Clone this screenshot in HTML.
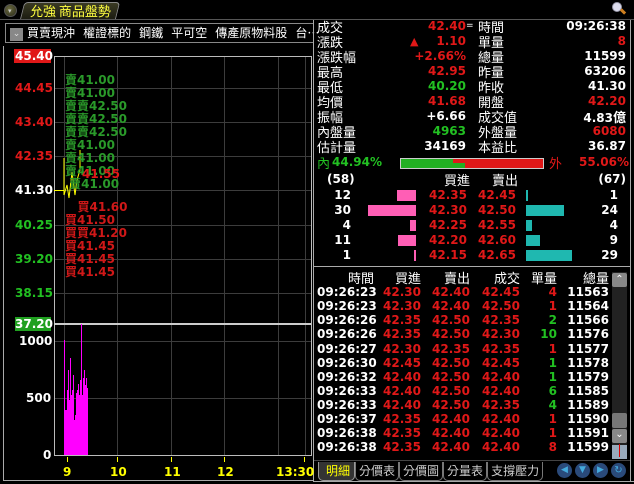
<!DOCTYPE html>
<html><head><meta charset="utf-8">
<style>
*{margin:0;padding:0;box-sizing:border-box}
body{width:634px;height:484px;background:#000;position:relative;overflow:hidden;font-family:"DejaVu Sans","Noto Sans CJK TC",sans-serif;color:#fff}
.a{position:absolute;white-space:nowrap}
.n{font-family:"DejaVu Sans",sans-serif;font-weight:bold;font-size:12px}
.c{font-family:"Noto Sans CJK TC","WenQuanYi Zen Hei",sans-serif;font-size:13px;color:#fff}
.r{color:#e01818}.g{color:#22c022}.w{color:#fff}
.row{position:absolute;left:0;width:634px;height:15px;line-height:15px}
.row span{position:absolute;white-space:nowrap}
</style></head><body>
<div class="a" style="left:0;top:0;width:634px;height:19px;background:#000"></div>
<div class="a" style="left:4px;top:4px;width:13px;height:13px;border-radius:50%;background:radial-gradient(circle at 40% 35%,#6a6a40,#2a2a18);border:1px solid #555"></div>
<div class="a" style="left:8px;top:7px;color:#ccc;font-size:7px">▾</div>
<div class="a" style="left:22px;top:2px;width:96px;height:18px;background:linear-gradient(#3a3a24,#1a1a10);border:1px solid #888;border-bottom:none;transform:skewX(-14deg);border-radius:4px 4px 0 0"></div>
<div class="a c" style="left:30px;top:1px;color:#ffff40;font-size:13px">允強 商品盤勢</div>
<div class="a" style="left:0;top:19px;width:634px;height:1px;background:#555"></div>
<div class="a" style="left:612px;top:2px;width:10px;height:10px;border-radius:50%;background:#dde;border:1px solid #99a"></div>
<div class="a" style="left:620px;top:10px;width:6px;height:3px;background:#d08020;transform:rotate(45deg)"></div>
<div class="a" style="left:5px;top:23px;width:309px;height:20px;border:1px solid #888"></div>
<div class="a" style="left:10px;top:28px;width:13px;height:13px;background:#888;color:#ddd;font-size:9px;text-align:center;line-height:13px">⌄</div>
<div class="a c" style="left:27px;top:24px;font-size:12px;letter-spacing:0">買賣現沖&nbsp;&nbsp;&nbsp;權證標的&nbsp;&nbsp;&nbsp;鋼鐵&nbsp;&nbsp;&nbsp;平可空&nbsp;&nbsp;&nbsp;傳產原物料股&nbsp;&nbsp;&nbsp;台…</div>
<div class="a" style="left:3px;top:46px;width:1px;height:434px;background:#aaa"></div>
<div class="a" style="left:3px;top:480px;width:311px;height:1px;background:#aaa"></div>
<div class="a" style="left:313px;top:20px;width:1px;height:462px;background:#aaa"></div>
<div class="a" style="left:630px;top:20px;width:1px;height:462px;background:#aaa"></div>
<div class="a" style="left:314px;top:481px;width:320px;height:1px;background:#aaa"></div>

<svg class="a" style="left:0;top:0" width="313" height="484">
<g stroke="#3c3c3c" stroke-width="1">
<line x1="54" y1="88.5" x2="311" y2="88.5"/><line x1="54" y1="122.5" x2="311" y2="122.5"/>
<line x1="54" y1="156.5" x2="311" y2="156.5"/><line x1="54" y1="190.5" x2="311" y2="190.5"/>
<line x1="54" y1="225.5" x2="311" y2="225.5"/><line x1="54" y1="259.5" x2="311" y2="259.5"/>
<line x1="54" y1="293.5" x2="311" y2="293.5"/><line x1="54" y1="341.5" x2="311" y2="341.5"/>
<line x1="54" y1="398.5" x2="311" y2="398.5"/>
<line x1="64.5" y1="56" x2="64.5" y2="455"/><line x1="117.5" y1="56" x2="117.5" y2="455"/>
<line x1="171.5" y1="56" x2="171.5" y2="455"/><line x1="224.5" y1="56" x2="224.5" y2="455"/>
<line x1="278.5" y1="56" x2="278.5" y2="455"/><line x1="305.5" y1="56" x2="305.5" y2="455"/>
</g>
<g stroke="#bbb" fill="none"><path d="M54.5 455.5V56.5H311.5V455.5H54"/></g>
<line x1="54" y1="324" x2="311" y2="324" stroke="#ccc" stroke-width="2"/>
<line x1="54" y1="190.5" x2="64" y2="190.5" stroke="#ff0" stroke-width="1"/>
<path d="M64 158 L64 195 L67 185 L69 198 L72 172 L75 195 L77 180 L80 170 L80 150" stroke="#ff0" fill="none"/>
<path d="M64 455 V340 H65 V410 H67 V390 H68 V370 H69 V400 H70 V358 H71 V395 H72 V390 H73 V375 H74 V420 H75 V415 H76 V393 H77 V390 H78 V384 H79 V395 H80 V380 H81 V324 H82 V395 H83 V378 H84 V370 H85 V385 H86 V378 H87 V388 H88 V455Z" fill="#ff00ff"/>
<g stroke="#ff0"><line x1="67.5" y1="457" x2="67.5" y2="462"/><line x1="117.5" y1="457" x2="117.5" y2="462"/><line x1="171.5" y1="457" x2="171.5" y2="462"/><line x1="224.5" y1="457" x2="224.5" y2="462"/><line x1="304.5" y1="457" x2="304.5" y2="462"/></g>
</svg>
<div class="a" style="left:14px;top:49px;width:37px;height:14px;background:#e01818"></div>
<div class="a n w" style="left:15px;top:49px;">45.40</div>
<div class="a n r" style="left:15px;top:81px;">44.45</div>
<div class="a n r" style="left:15px;top:115px;">43.40</div>
<div class="a n r" style="left:15px;top:149px;">42.35</div>
<div class="a n w" style="left:15px;top:183px;">41.30</div>
<div class="a n g" style="left:15px;top:218px;">40.25</div>
<div class="a n g" style="left:15px;top:252px;">39.20</div>
<div class="a n g" style="left:15px;top:286px;">38.15</div>
<div class="a" style="left:15px;top:317px;width:36px;height:14px;background:#20a020"></div>
<div class="a n w" style="left:15px;top:317px;">37.20</div>
<div class="a n w" style="left:19px;top:334px;">1000</div>
<div class="a n w" style="left:26px;top:391px;">500</div>
<div class="a n w" style="left:43px;top:448px;">0</div>
<div class="a n" style="left:63px;top:465px;color:#ff0">9</div>
<div class="a n" style="left:110px;top:465px;color:#ff0">10</div>
<div class="a n" style="left:164px;top:465px;color:#ff0">11</div>
<div class="a n" style="left:217px;top:465px;color:#ff0">12</div>
<div class="a n" style="left:276px;top:465px;color:#ff0">13:30</div>
<div class="a" style="left:65px;top:74px;font-size:12px;line-height:13px;color:#2a9a2a;font-weight:bold">
<div>賣41.00</div><div>賣41.00</div><div>賣賣42.50</div><div>賣賣42.50</div><div>賣賣42.50</div><div>賣41.00</div><div>賣41.00</div><div>賣41.00</div><div>&nbsp;賣41.00</div></div>
<div class="a r" style="left:82px;top:167px;font-size:12px;font-weight:bold">41.55</div>
<div class="a" style="left:65px;top:201px;font-size:12px;line-height:13px;color:#d01818;font-weight:bold">
<div>&nbsp;&nbsp;&nbsp;買41.60</div><div>買41.50</div><div>買買41.20</div><div>買41.45</div><div>買41.45</div><div>買41.45</div></div>

<div class="row" style="top:19px"><span class="c" style="left:317px">成交</span><span class="n r" style="right:168px">42.40</span><span class="w" style="left:466px;font-size:9px">=</span><span class="c" style="left:478px">時間</span><span class="n w" style="right:8px">09:26:38</span></div>
<div class="row" style="top:34px"><span class="c" style="left:317px">漲跌</span><span class="r" style="left:410px;font-size:11px">▲</span><span class="n r" style="right:168px">1.10</span><span class="c" style="left:478px">單量</span><span class="n r" style="right:8px">8</span></div>
<div class="row" style="top:49px"><span class="c" style="left:317px">漲跌幅</span><span class="n r" style="right:168px">+2.66%</span><span class="c" style="left:478px">總量</span><span class="n w" style="right:8px">11599</span></div>
<div class="row" style="top:64px"><span class="c" style="left:317px">最高</span><span class="n r" style="right:168px">42.95</span><span class="c" style="left:478px">昨量</span><span class="n w" style="right:8px">63206</span></div>
<div class="row" style="top:79px"><span class="c" style="left:317px">最低</span><span class="n g" style="right:168px">40.20</span><span class="c" style="left:478px">昨收</span><span class="n w" style="right:8px">41.30</span></div>
<div class="row" style="top:94px"><span class="c" style="left:317px">均價</span><span class="n r" style="right:168px">41.68</span><span class="c" style="left:478px">開盤</span><span class="n r" style="right:8px">42.20</span></div>
<div class="row" style="top:109px"><span class="c" style="left:317px">振幅</span><span class="n w" style="right:168px">+6.66</span><span class="c" style="left:478px">成交值</span><span class="n w" style="right:8px">4.83<span class="c" style="position:static">億</span></span></div>
<div class="row" style="top:124px"><span class="c" style="left:317px">內盤量</span><span class="n g" style="right:168px">4963</span><span class="c" style="left:478px">外盤量</span><span class="n r" style="right:8px">6080</span></div>
<div class="row" style="top:139px"><span class="c" style="left:317px">估計量</span><span class="n w" style="right:168px">34169</span><span class="c" style="left:478px">本益比</span><span class="n w" style="right:8px">36.87</span></div>
<div class="row" style="top:155px"><span class="c g" style="left:317px">內</span><span class="n g" style="left:332px">44.94%</span><span class="c r" style="left:549px">外</span><span class="n r" style="right:5px">55.06%</span></div>
<div class="a" style="left:400px;top:158px;width:144px;height:11px;border:1px solid #ccc;background:#e01818"></div>
<div class="a" style="left:401px;top:163px;width:64px;height:5px;background:#22b022"></div>
<div class="a" style="left:401px;top:159px;width:52px;height:4px;background:#22b022"></div>
<div class="row" style="top:172px"><span class="n w" style="left:327px">(58)</span><span class="c" style="left:444px">買進</span><span class="c" style="left:492px">賣出</span><span class="n w" style="right:8px">(67)</span></div>
<div class="row" style="top:188px"><span class="n w" style="right:283px">12</span><span style="left:397px;width:19px;height:11px;top:2px;background:#ff5eb5"></span><span class="n r" style="right:167px">42.35</span><span class="n r" style="right:118px">42.45</span><span style="left:526px;width:2px;height:11px;top:2px;background:#1fb8b0"></span><span class="n w" style="right:16px">1</span></div>
<div class="row" style="top:203px"><span class="n w" style="right:283px">30</span><span style="left:368px;width:48px;height:11px;top:2px;background:#ff5eb5"></span><span class="n r" style="right:167px">42.30</span><span class="n r" style="right:118px">42.50</span><span style="left:526px;width:38px;height:11px;top:2px;background:#1fb8b0"></span><span class="n w" style="right:16px">24</span></div>
<div class="row" style="top:218px"><span class="n w" style="right:283px">4</span><span style="left:410px;width:6px;height:11px;top:2px;background:#ff5eb5"></span><span class="n r" style="right:167px">42.25</span><span class="n r" style="right:118px">42.55</span><span style="left:526px;width:6px;height:11px;top:2px;background:#1fb8b0"></span><span class="n w" style="right:16px">4</span></div>
<div class="row" style="top:233px"><span class="n w" style="right:283px">11</span><span style="left:398px;width:18px;height:11px;top:2px;background:#ff5eb5"></span><span class="n r" style="right:167px">42.20</span><span class="n r" style="right:118px">42.60</span><span style="left:526px;width:14px;height:11px;top:2px;background:#1fb8b0"></span><span class="n w" style="right:16px">9</span></div>
<div class="row" style="top:248px"><span class="n w" style="right:283px">1</span><span style="left:414px;width:2px;height:11px;top:2px;background:#ff5eb5"></span><span class="n r" style="right:167px">42.15</span><span class="n r" style="right:118px">42.65</span><span style="left:526px;width:46px;height:11px;top:2px;background:#1fb8b0"></span><span class="n w" style="right:16px">29</span></div>
<div class="a" style="left:314px;top:266px;width:316px;height:1px;background:#aaa"></div>
<div class="row" style="top:270px"><span class="c" style="left:348px">時間</span><span class="c" style="right:213px">買進</span><span class="c" style="right:164px">賣出</span><span class="c" style="right:114px">成交</span><span class="c" style="right:77px">單量</span><span class="c" style="right:25px">總量</span></div>
<div class="a" style="left:612px;top:272px;width:15px;height:173px;background:#222"></div>
<div class="a" style="left:612px;top:273px;width:15px;height:14px;background:#888;border-radius:2px;color:#fff;font-size:10px;text-align:center;line-height:14px">⌃</div>
<div class="a" style="left:612px;top:413px;width:15px;height:15px;background:#777;border-radius:2px"></div>
<div class="a" style="left:612px;top:429px;width:15px;height:14px;background:#888;border-radius:2px;color:#fff;font-size:10px;text-align:center;line-height:12px">⌄</div>
<div class="a" style="left:612px;top:445px;width:15px;height:14px;background:#9ab;"></div>
<div class="a" style="left:619px;top:444px;width:1px;height:13px;background:#d00"></div>
<div class="a" style="left:314px;top:460px;width:316px;height:1px;background:#444"></div>
<div class="a c" style="left:318px;top:462px;font-size:12px;color:#ccc;line-height:18px">
<span style="display:inline-block;border:1px solid #999;border-top:none;padding:0 4px 0 7px;color:#ff0;background:#333;border-radius:0 0 5px 5px">明細</span><span style="display:inline-block;border:1px solid #777;border-top:none;padding:0 3px;border-radius:0 0 5px 5px">分價表</span><span style="display:inline-block;border:1px solid #777;border-top:none;padding:0 3px;border-radius:0 0 5px 5px">分價圖</span><span style="display:inline-block;border:1px solid #777;border-top:none;padding:0 3px;border-radius:0 0 5px 5px">分量表</span><span style="display:inline-block;border:1px solid #777;border-top:none;padding:0 3px;border-radius:0 0 5px 5px">支撐壓力</span></div>
<div class="a" style="left:557px;top:463px;width:15px;height:15px;border-radius:50%;background:#2a4a7a;color:#4ad;font-size:9px;text-align:center;line-height:15px">◀</div>
<div class="a" style="left:575px;top:463px;width:15px;height:15px;border-radius:50%;background:#2a4a7a;color:#4ad;font-size:9px;text-align:center;line-height:15px">▼</div>
<div class="a" style="left:593px;top:463px;width:15px;height:15px;border-radius:50%;background:#2a4a7a;color:#4ad;font-size:9px;text-align:center;line-height:15px">▶</div>
<div class="a" style="left:611px;top:463px;width:15px;height:15px;border-radius:50%;background:#2a4a7a;color:#4ad;font-size:10px;text-align:center;line-height:15px">↻</div>

<div class="row" style="top:285px"><span class="n w" style="left:317px">09:26:23</span><span class="n r" style="right:213px">42.30</span><span class="n r" style="right:164px">42.40</span><span class="n r" style="right:114px">42.45</span><span class="n r" style="right:77px">4</span><span class="n w" style="right:25px">11563</span></div>
<div class="row" style="top:299px"><span class="n w" style="left:317px">09:26:23</span><span class="n r" style="right:213px">42.30</span><span class="n r" style="right:164px">42.40</span><span class="n r" style="right:114px">42.50</span><span class="n r" style="right:77px">1</span><span class="n w" style="right:25px">11564</span></div>
<div class="row" style="top:313px"><span class="n w" style="left:317px">09:26:26</span><span class="n r" style="right:213px">42.35</span><span class="n r" style="right:164px">42.50</span><span class="n r" style="right:114px">42.35</span><span class="n g" style="right:77px">2</span><span class="n w" style="right:25px">11566</span></div>
<div class="row" style="top:327px"><span class="n w" style="left:317px">09:26:26</span><span class="n r" style="right:213px">42.35</span><span class="n r" style="right:164px">42.50</span><span class="n r" style="right:114px">42.30</span><span class="n g" style="right:77px">10</span><span class="n w" style="right:25px">11576</span></div>
<div class="row" style="top:342px"><span class="n w" style="left:317px">09:26:27</span><span class="n r" style="right:213px">42.30</span><span class="n r" style="right:164px">42.35</span><span class="n r" style="right:114px">42.35</span><span class="n r" style="right:77px">1</span><span class="n w" style="right:25px">11577</span></div>
<div class="row" style="top:356px"><span class="n w" style="left:317px">09:26:30</span><span class="n r" style="right:213px">42.45</span><span class="n r" style="right:164px">42.50</span><span class="n r" style="right:114px">42.45</span><span class="n g" style="right:77px">1</span><span class="n w" style="right:25px">11578</span></div>
<div class="row" style="top:370px"><span class="n w" style="left:317px">09:26:32</span><span class="n r" style="right:213px">42.40</span><span class="n r" style="right:164px">42.50</span><span class="n r" style="right:114px">42.40</span><span class="n g" style="right:77px">1</span><span class="n w" style="right:25px">11579</span></div>
<div class="row" style="top:384px"><span class="n w" style="left:317px">09:26:33</span><span class="n r" style="right:213px">42.40</span><span class="n r" style="right:164px">42.50</span><span class="n r" style="right:114px">42.40</span><span class="n g" style="right:77px">6</span><span class="n w" style="right:25px">11585</span></div>
<div class="row" style="top:398px"><span class="n w" style="left:317px">09:26:33</span><span class="n r" style="right:213px">42.40</span><span class="n r" style="right:164px">42.50</span><span class="n r" style="right:114px">42.35</span><span class="n g" style="right:77px">4</span><span class="n w" style="right:25px">11589</span></div>
<div class="row" style="top:412px"><span class="n w" style="left:317px">09:26:37</span><span class="n r" style="right:213px">42.35</span><span class="n r" style="right:164px">42.40</span><span class="n r" style="right:114px">42.40</span><span class="n r" style="right:77px">1</span><span class="n w" style="right:25px">11590</span></div>
<div class="row" style="top:426px"><span class="n w" style="left:317px">09:26:38</span><span class="n r" style="right:213px">42.35</span><span class="n r" style="right:164px">42.40</span><span class="n r" style="right:114px">42.40</span><span class="n r" style="right:77px">1</span><span class="n w" style="right:25px">11591</span></div>
<div class="row" style="top:440px"><span class="n w" style="left:317px">09:26:38</span><span class="n r" style="right:213px">42.35</span><span class="n r" style="right:164px">42.40</span><span class="n r" style="right:114px">42.40</span><span class="n r" style="right:77px">8</span><span class="n w" style="right:25px">11599</span></div>
</body></html>
